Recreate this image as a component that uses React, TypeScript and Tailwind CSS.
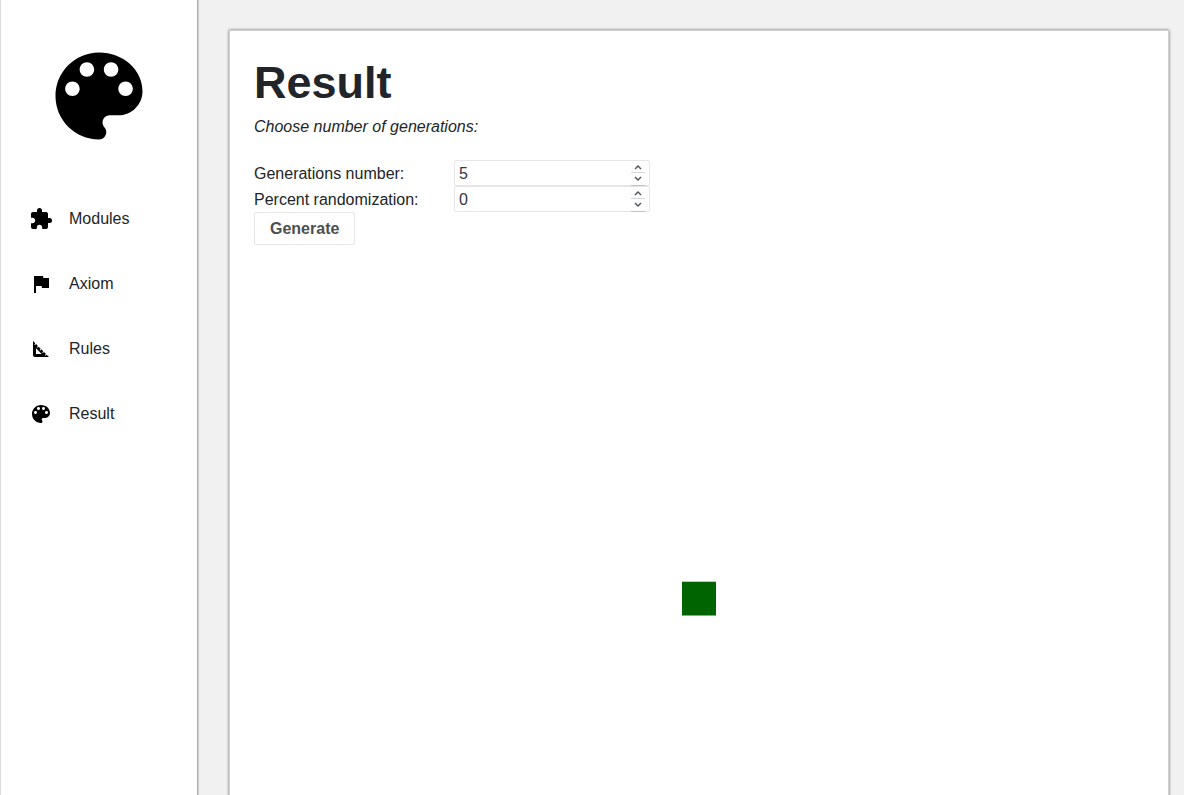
import { useState } from "react";
import { MdExtension, MdFlag, MdSquareFoot } from "react-icons/md";

function Palette({ className }: { className: string }) {
  return (
    <svg viewBox="0 0 24 24" fill="currentColor" aria-hidden="true" className={className}>
      <path d="M12 3c-4.97 0-9 4.03-9 9s4.03 9 9 9c.83 0 1.5-.67 1.5-1.5 0-.39-.15-.74-.39-1.01-.23-.26-.38-.61-.38-.99 0-.83.67-1.5 1.5-1.5H16c2.76 0 5-2.24 5-5 0-4.42-4.03-8-9-8zm-5.5 9c-.83 0-1.5-.67-1.5-1.5S5.67 9 6.5 9 8 9.67 8 10.5 7.33 12 6.5 12zm3-4C8.67 8 8 7.33 8 6.5S8.67 5 9.5 5s1.5.67 1.5 1.5S10.33 8 9.5 8zm5 0c-.83 0-1.5-.67-1.5-1.5S13.67 5 14.5 5s1.5.67 1.5 1.5S15.33 8 14.5 8zm3 4c-.83 0-1.5-.67-1.5-1.5S16.67 9 17.5 9s1.5.67 1.5 1.5-.67 1.5-1.5 1.5z" />
    </svg>
  );
}

const links = [
  { label: "Modules", icon: <MdExtension className="size-6" /> },
  { label: "Axiom", icon: <MdFlag className="size-6" /> },
  { label: "Rules", icon: <MdSquareFoot className="size-6" /> },
  { label: "Result", icon: <Palette className="size-6" /> },
];

function Chevron({ d }: { d: string }) {
  return (
    <svg viewBox="0 0 8 5" fill="none" stroke="#4b5154" strokeWidth="1.4" className="h-[5px] w-2" aria-hidden="true">
      <path d={d} />
    </svg>
  );
}

function NumberField({ id, label, initial }: { id: string; label: string; initial: number }) {
  const [value, setValue] = useState(initial);
  return (
    <div className="flex items-center">
      <label htmlFor={id} className="w-[200px] pt-0.5 leading-6">
        {label}
      </label>
      <div className="flex h-[26px] w-[196px] rounded-[2px] border border-[#e6e6e6] bg-white pr-1">
        <input
          id={id}
          type="number"
          value={value}
          onChange={(e) => setValue(Number(e.target.value))}
          className="min-w-0 flex-1 appearance-none bg-transparent pt-0.5 pl-1 text-[#31363b] outline-none [-moz-appearance:textfield] [&::-webkit-inner-spin-button]:appearance-none"
        />
        <div className="flex h-[25px] w-3.5 flex-col border-b border-[#bfc0c1]">
          <button
            type="button"
            aria-label={`Increase ${label}`}
            onClick={() => setValue(value + 1)}
            className="flex h-3 items-center justify-center border-b border-[#d5d6d7] pt-0.5"
          >
            <Chevron d="M1 4l3-3 3 3" />
          </button>
          <button
            type="button"
            aria-label={`Decrease ${label}`}
            onClick={() => setValue(value - 1)}
            className="flex h-3 items-center justify-center pb-0.5"
          >
            <Chevron d="M1 1l3 3 3-3" />
          </button>
        </div>
      </div>
    </div>
  );
}

export default function App() {
  return (
    <div className="flex h-screen overflow-hidden bg-[#f1f1f1] font-['Liberation_Sans',Arial,sans-serif] text-base text-[#212529]">
      <aside className="w-[198px] shrink-0 border-x border-l-[#dcdcdc] border-r-[#b0b0b0] bg-white shadow-[1px_0_1px_#d4d4d4]">
        <div className="flex justify-center pt-[38px] text-black">
          <Palette className="size-[116px]" />
        </div>
        <nav className="mt-8">
          <ul>
            {links.map((link) => (
              <li key={link.label}>
                <a href={`#${link.label.toLowerCase()}`} className="flex h-[65px] items-center gap-4 pl-7">
                  <span className="text-black">{link.icon}</span>
                  {link.label}
                </a>
              </li>
            ))}
          </ul>
        </nav>
      </aside>
      <main className="min-w-0 flex-1 overflow-y-auto pt-[30px] pr-[15px] pb-[30px] pl-[31px] [scrollbar-width:none]">
        <section className="rounded-[1px] border border-[#d0d0d0] bg-white px-6 pt-[25px] pb-6 shadow-[0_0_3px_#606060]">
          <h1 className="text-[45px] leading-[54px] font-bold">Result</h1>
          <p className="mt-[5px] leading-6 italic">Choose number of generations:</p>
          <form className="mt-[21px]" onSubmit={(e) => e.preventDefault()}>
            <NumberField id="generations" label="Generations number:" initial={5} />
            <NumberField id="randomization" label="Percent randomization:" initial={0} />
            <button
              type="submit"
              className="block h-[33px] rounded-[2px] border border-[#e6e6e6] bg-white px-[15px] font-bold text-[#4b4f52]"
            >
              Generate
            </button>
          </form>
          <svg viewBox="0 0 890 707" className="block h-[707px] w-full" role="img" aria-label="Generated drawing">
            <rect x="428" y="336.7" width="34" height="33.8" fill="#006400" />
          </svg>
        </section>
      </main>
    </div>
  );
}
